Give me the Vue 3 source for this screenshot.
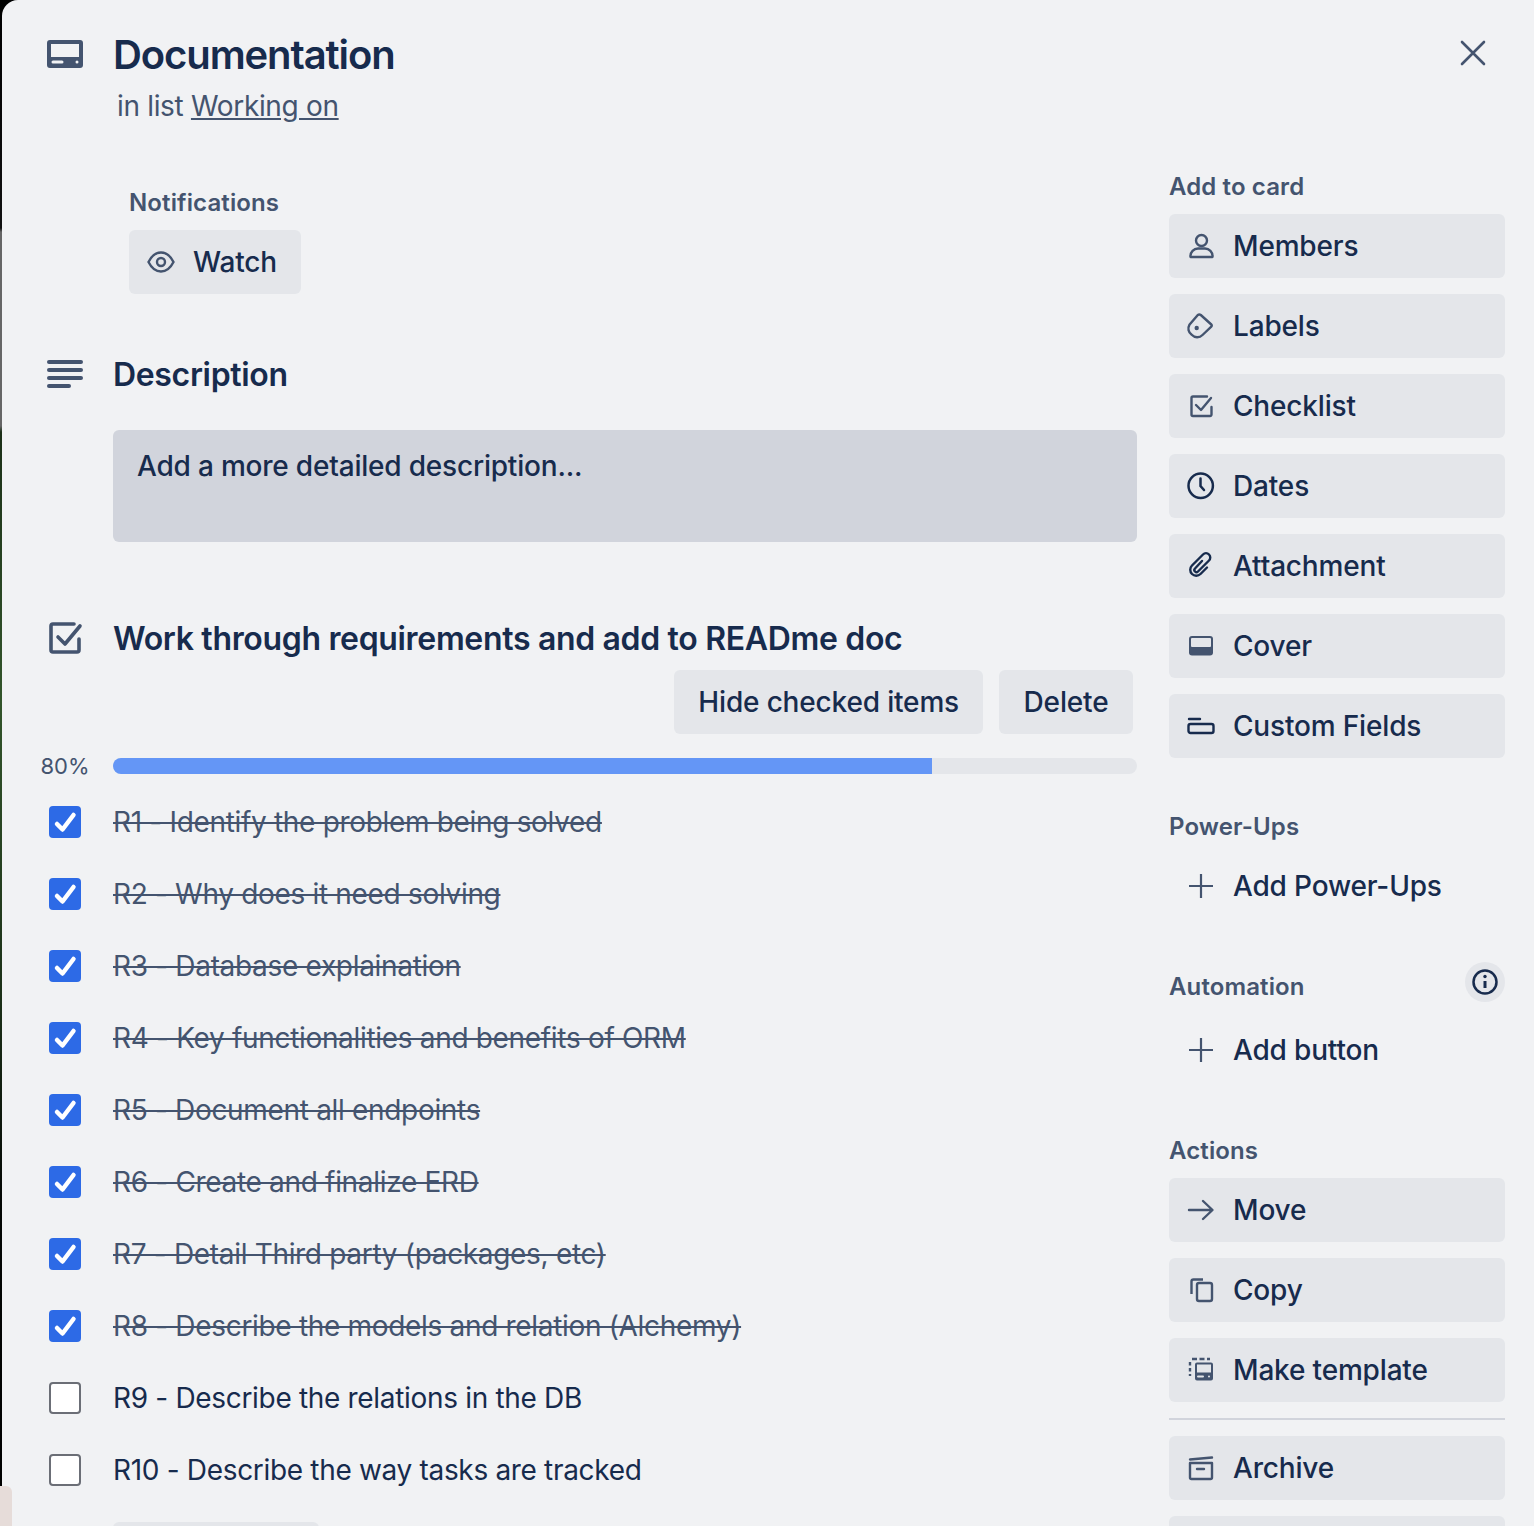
<script setup>
import { ref } from "vue";

const items = ref([
  { text: "R1 - Identify the problem being solved", done: true },
  { text: "R2 - Why does it need solving", done: true },
  { text: "R3 - Database explaination", done: true },
  { text: "R4 - Key functionalities and benefits of ORM", done: true },
  { text: "R5 - Document all endpoints", done: true },
  { text: "R6 - Create and finalize ERD", done: true },
  { text: "R7 - Detail Third party (packages, etc)", done: true },
  { text: "R8 - Describe the models and relation (Alchemy)", done: true },
  { text: "R9 - Describe the relations in the DB", done: false },
  { text: "R10 - Describe the way tasks are tracked", done: false }
]);

const addToCard = ["Members", "Labels", "Checklist", "Dates", "Attachment", "Cover", "Custom Fields"];
const actions = ["Move", "Copy", "Make template"];
</script>

<template>
  <div class="page">
    <div class="modal">
      <div class="main">
        <header class="row head">
          <svg class="gutter-icon" width="36" height="28" viewBox="0 0 36 28">
            <path fill="#44546f" fill-rule="evenodd" d="M3 0h30a3 3 0 0 1 3 3v22a3 3 0 0 1-3 3H3a3 3 0 0 1-3-3V3a3 3 0 0 1 3-3zm1 4v13h28V4zm2 16.500a1.500 1.500 0 0 0 0 3h9a1.500 1.500 0 0 0 0-3zm24 0a1.500 1.500 0 1 0 0 3 1.500 1.500 0 0 0 0-3z"/>
          </svg>
          <div>
            <h1 class="title">Documentation</h1>
            <p class="sub">in list <a href="#" @click.prevent>Working on</a></p>
          </div>
        </header>

        <div class="notif">
          <div class="label">Notifications</div>
          <button class="btn watch">
            <svg width="32" height="32" viewBox="0 0 32 32" fill="none" stroke="#44546f" stroke-width="2.400">
              <path d="M3.500 16C6.500 10 10.500 6.500 16 6.500S25.500 10 28.500 16C25.500 22 21.500 25.500 16 25.500S6.500 22 3.500 16z"/>
              <circle cx="16" cy="16" r="4"/>
            </svg>
            Watch
          </button>
        </div>

        <section class="row desc-head">
          <svg class="gutter-icon" width="36" height="28" viewBox="0 0 36 28" fill="#44546f">
            <rect x="0" y="0" width="36" height="4" rx="2"/>
            <rect x="0" y="8" width="36" height="4" rx="2"/>
            <rect x="0" y="16" width="36" height="4" rx="2"/>
            <rect x="0" y="24" width="24" height="4" rx="2"/>
          </svg>
          <h2 class="heading">Description</h2>
        </section>
        <div class="desc-box">Add a more detailed description...</div>

        <section class="row check-head">
          <svg class="gutter-icon" width="36" height="36" viewBox="0 0 36 36" fill="none" stroke="#44546f" stroke-width="3.600" stroke-linecap="round" stroke-linejoin="round">
            <path d="M27 4H6a2 2 0 0 0-2 2v24a2 2 0 0 0 2 2h24a2 2 0 0 0 2-2V19"/>
            <path d="M11 17l7 7L33 6"/>
          </svg>
          <h2 class="heading">Work through requirements and add to READme doc</h2>
        </section>
        <div class="check-actions">
          <button class="btn">Hide checked items</button>
          <button class="btn delete">Delete</button>
        </div>
        <div class="progress">
          <span class="pct">80%</span>
          <div class="track"><div class="fill" :style="{ width: '80%' }"></div></div>
        </div>
        <ul class="items">
          <li v-for="item in items" :key="item.text" class="item">
            <span class="box" :class="{ on: item.done }">
              <svg v-if="item.done" width="32" height="32" viewBox="0 0 32 32" fill="none" stroke="#fff" stroke-width="4.500" stroke-linecap="round" stroke-linejoin="round">
                <path d="M8 18l5.500 5.500L24.500 9"/>
              </svg>
            </span>
            <span class="item-text" :class="{ done: item.done }">{{ item.text }}</span>
          </li>
        </ul>
        <button class="btn add-item"></button>
      </div>

      <aside class="side">
        <button class="close" aria-label="Close">
          <svg width="32" height="32" viewBox="0 0 32 32" fill="none" stroke="#44546f" stroke-width="2.600" stroke-linecap="round">
            <path d="M5 5l22 22M27 5L5 27"/>
          </svg>
        </button>

        <div class="label side-first">Add to card</div>
        <div class="stack">
          <button v-for="name in addToCard" :key="name" class="btn wide">
            <svg width="32" height="32" viewBox="0 0 32 32" fill="none" stroke="#44546f" stroke-width="2.400">
              <g v-if="name === 'Members'">
                <circle cx="16.500" cy="10.500" r="5.500"/>
                <path d="M5.500 27c-.5-5 3.500-8.500 7.500-8.500h7c4 0 8 3.500 7.500 8.500z" stroke-linejoin="round"/>
              </g>
              <g v-else-if="name === 'Labels'">
                <path d="M12.800 5a2.500 2.500 0 0 1 3 0L26.300 14.500a1.500 1.500 0 0 1 0 2.200L17.500 25a7.500 7.500 0 0 1-10.800-.2 7.500 7.500 0 0 1-2.300-10z" stroke-linejoin="round"/>
                <circle cx="11.700" cy="18" r="2.200" fill="#44546f" stroke="none"/>
              </g>
              <g v-else-if="name === 'Checklist'" stroke-linecap="round" stroke-linejoin="round">
                <path d="M22 6.500H8a1.500 1.500 0 0 0-1.500 1.500v16.500A1.500 1.500 0 0 0 8 26h17a1.500 1.500 0 0 0 1.500-1.500V17"/>
                <path d="M11 15l5 5 10-12"/>
              </g>
              <g v-else-if="name === 'Dates'" stroke="#172b4d" stroke-width="2.500" stroke-linecap="round">
                <circle cx="15.700" cy="15.700" r="12.200"/>
                <path d="M15.500 8.500v7.500l3.500 4"/>
              </g>
              <g v-else-if="name === 'Attachment'" stroke="#172b4d" stroke-linecap="round">
                <path d="M17 11l-7 7.500a2 2 0 0 0 3 3L24 10.500a4.200 4.200 0 0 0-6-6L7 15.500a6 6 0 0 0 8.500 8.500L22 17.500"/>
              </g>
              <g v-else-if="name === 'Cover'">
                <rect x="4" y="6" width="24" height="19.500" rx="3" fill="#44546f" stroke="none"/>
                <rect x="6" y="8" width="20" height="9" rx="1" fill="#e4e6ea" stroke="none"/>
              </g>
              <g v-else stroke="#172b4d" stroke-linecap="round">
                <path d="M4 9h11"/>
                <rect x="3.500" y="14" width="25" height="9" rx="2"/>
              </g>
            </svg>
            {{ name }}
          </button>
        </div>

        <div class="label side-label">Power-Ups</div>
        <button class="btn wide plain">
          <svg width="32" height="32" viewBox="0 0 32 32" fill="none" stroke="#44546f" stroke-width="2.200"><path d="M16 4v24M4 16h24"/></svg>
          Add Power-Ups
        </button>

        <div class="auto-row">
          <div class="label">Automation</div>
          <span class="info">
            <svg width="40" height="40" viewBox="0 0 40 40" fill="none" stroke="#172b4d" stroke-width="2.500">
              <circle cx="20" cy="20" r="11.500"/>
              <path d="M20 19v7" stroke-width="3"/>
              <circle cx="20" cy="14.500" r="1.700" fill="#172b4d" stroke="none"/>
            </svg>
          </span>
        </div>
        <button class="btn wide plain">
          <svg width="32" height="32" viewBox="0 0 32 32" fill="none" stroke="#44546f" stroke-width="2.200"><path d="M16 4v24M4 16h24"/></svg>
          Add button
        </button>

        <div class="label side-label">Actions</div>
        <div class="stack">
          <button v-for="name in actions" :key="name" class="btn wide">
            <svg width="32" height="32" viewBox="0 0 32 32" fill="none" stroke="#44546f" stroke-width="2.400">
              <g v-if="name === 'Move'" stroke-linecap="round" stroke-linejoin="round">
                <path d="M4 16h23M18 7l9.500 9-9.500 9"/>
              </g>
              <g v-else-if="name === 'Copy'">
                <rect x="12" y="9" width="15" height="18" rx="2"/>
                <path d="M18 5.500H8.500a2 2 0 0 0-2 2V20"/>
              </g>
              <g v-else>
                <path d="M7 5h18" stroke-dasharray="5 2.500"/>
                <path d="M5 8v14" stroke-dasharray="3.500 2.500"/>
                <path fill="#44546f" stroke="none" fill-rule="evenodd" d="M12 8.500h14a2 2 0 0 1 2 2v14a2 2 0 0 1-2 2H12a2 2 0 0 1-2-2v-14a2 2 0 0 1 2-2zm0 2v8h14v-8zm1 11a1 1 0 0 0 0 2h5a1 1 0 0 0 0-2zm11 0a1 1 0 1 0 0 2 1 1 0 0 0 0-2z"/>
              </g>
            </svg>
            {{ name }}
          </button>
        </div>
        <hr class="divider" />
        <div class="stack">
          <button class="btn wide">
            <svg width="32" height="32" viewBox="0 0 32 32" fill="none" stroke="#44546f" stroke-width="2.400" stroke-linecap="round">
              <path d="M5 7.500L27 5.500"/>
              <path d="M5 11h22v14.500a1.500 1.500 0 0 1-1.500 1.500h-19A1.500 1.500 0 0 1 5 25.500z" stroke-linejoin="round"/>
              <path d="M12 17h7"/>
            </svg>
            Archive
          </button>
          <button class="btn wide"></button>
        </div>
      </aside>
    </div>
    <div class="peek"></div>
  </div>
</template>

<style>
html,
body {
  overflow: hidden;
}
</style>

<style scoped>
.page {
  position: relative;
  width: 1534px;
  height: 1526px;
  overflow: hidden;
  background: linear-gradient(#000 0, #111 228px, #666 232px, #666 426px, #1c3018 432px, #33552b 700px, #1c3018 1000px, #050805 1200px, #000 1526px);
  font-family: Inter, "Liberation Sans", sans-serif;
  color: #172b4d;
}
.modal {
  display: flex;
  gap: 32px;
  margin-left: 2px;
  height: 100%;
  padding-left: 45px;
  background: #f1f2f4;
  border-top-left-radius: 16px;
  box-sizing: border-box;
}
.main {
  width: 1090px;
  flex: none;
  padding-top: 32px;
}
.row {
  display: flex;
  gap: 30px;
}
.gutter-icon {
  flex: none;
}
.head .gutter-icon {
  margin-top: 8px;
}
.title {
  margin: 0;
  font-size: 40px;
  line-height: 46px;
  font-weight: 600;
  letter-spacing: -1.1px;
}
.sub {
  margin: 8px 0 0;
  padding-left: 4px;
  font-size: 28px;
  line-height: 40px;
  letter-spacing: -0.33px;
  color: #44546f;
}
.sub a {
  color: #44546f;
}
.notif {
  margin: 60px 0 0 82px;
}
.label {
  font-size: 24px;
  line-height: 34px;
  font-weight: 600;
  letter-spacing: 0.12px;
  color: #44546f;
}
.notif .label {
  margin-bottom: 10px;
}
.btn {
  display: flex;
  align-items: center;
  height: 64px;
  padding: 0 24px;
  border: 0;
  border-radius: 6px;
  background: #e4e6ea;
  color: #172b4d;
  font-family: inherit;
  font-size: 28px;
  font-weight: 500;
  letter-spacing: -0.17px;
}
.delete {
  width: 134px;
  justify-content: center;
}
.watch {
  padding: 0 24px 0 16px;
  gap: 16px;
}
.desc-head {
  align-items: center;
  margin-top: 60px;
  height: 40px;
}
.heading {
  margin: 0;
  padding-top: 2px;
  font-size: 32px;
  line-height: 40px;
  font-weight: 600;
  letter-spacing: -0.33px;
}
.desc-box {
  box-sizing: border-box;
  margin: 36px 0 0 66px;
  width: 1024px;
  height: 112px;
  padding: 16px 24px;
  border-radius: 6px;
  background: #d1d4dc;
  font-size: 28px;
  line-height: 40px;
  font-weight: 500;
  letter-spacing: -0.2px;
}
.check-head {
  align-items: center;
  margin-top: 76px;
  height: 40px;
}
.check-actions {
  display: flex;
  justify-content: flex-end;
  gap: 16px;
  width: 1086px;
  margin-top: 12px;
}
.progress {
  display: flex;
  align-items: center;
  margin-top: 24px;
  height: 16px;
}
.pct {
  width: 66px;
  margin-left: -15px;
  margin-right: 15px;
  text-align: center;
  font-size: 22px;
  color: #44546f;
  flex: none;
}
.track {
  width: 1024px;
  height: 16px;
  border-radius: 8px;
  background: #e4e6ea;
  overflow: hidden;
}
.fill {
  height: 100%;
  background: #6496f6;
}
.items {
  margin: 12px 0 0;
  padding: 0;
  list-style: none;
}
.item {
  display: flex;
  align-items: center;
  height: 72px;
  padding-left: 2px;
  gap: 32px;
}
.box {
  box-sizing: border-box;
  width: 32px;
  height: 32px;
  border-radius: 4px;
  border: 2px solid #6b6e76;
  background: #fff;
  flex: none;
}
.box svg {
  display: block;
}
.box.on {
  border: 0;
  background: #2d6ae6;
}
.item-text {
  font-size: 28px;
  line-height: 40px;
  letter-spacing: -0.32px;
}
.item-text.done {
  color: #44546f;
  text-decoration: line-through;
}
.add-item {
  margin: 16px 0 0 66px;
  width: 206px;
}
.side {
  position: relative;
  width: 336px;
  flex: none;
  padding-top: 170px;
}
.close {
  position: absolute;
  top: 37px;
  right: 16px;
  width: 32px;
  height: 32px;
  padding: 0;
  border: 0;
  background: none;
}
.side-first {
  margin-bottom: 10px;
}
.side-label {
  margin-top: 52px;
  margin-bottom: 10px;
}
.stack {
  display: flex;
  flex-direction: column;
  gap: 16px;
}
.wide {
  width: 100%;
  padding: 0 16px;
  gap: 16px;
}
.plain {
  background: none;
}
.auto-row {
  display: flex;
  justify-content: space-between;
  align-items: flex-end;
  margin-top: 44px;
  margin-bottom: 16px;
}
.auto-row .label {
  margin-bottom: -2px;
}
.info {
  display: block;
  width: 40px;
  height: 40px;
  border-radius: 50%;
  background: #e4e6ea;
}
.info svg {
  display: block;
}
.divider {
  margin: 16px 0;
  height: 2px;
  border: 0;
  background: #d1d4dc;
}
.peek {
  position: absolute;
  left: 0;
  top: 1486px;
  width: 12px;
  height: 40px;
  background: #e6dcd9;
  border-top-right-radius: 6px;
}
</style>
